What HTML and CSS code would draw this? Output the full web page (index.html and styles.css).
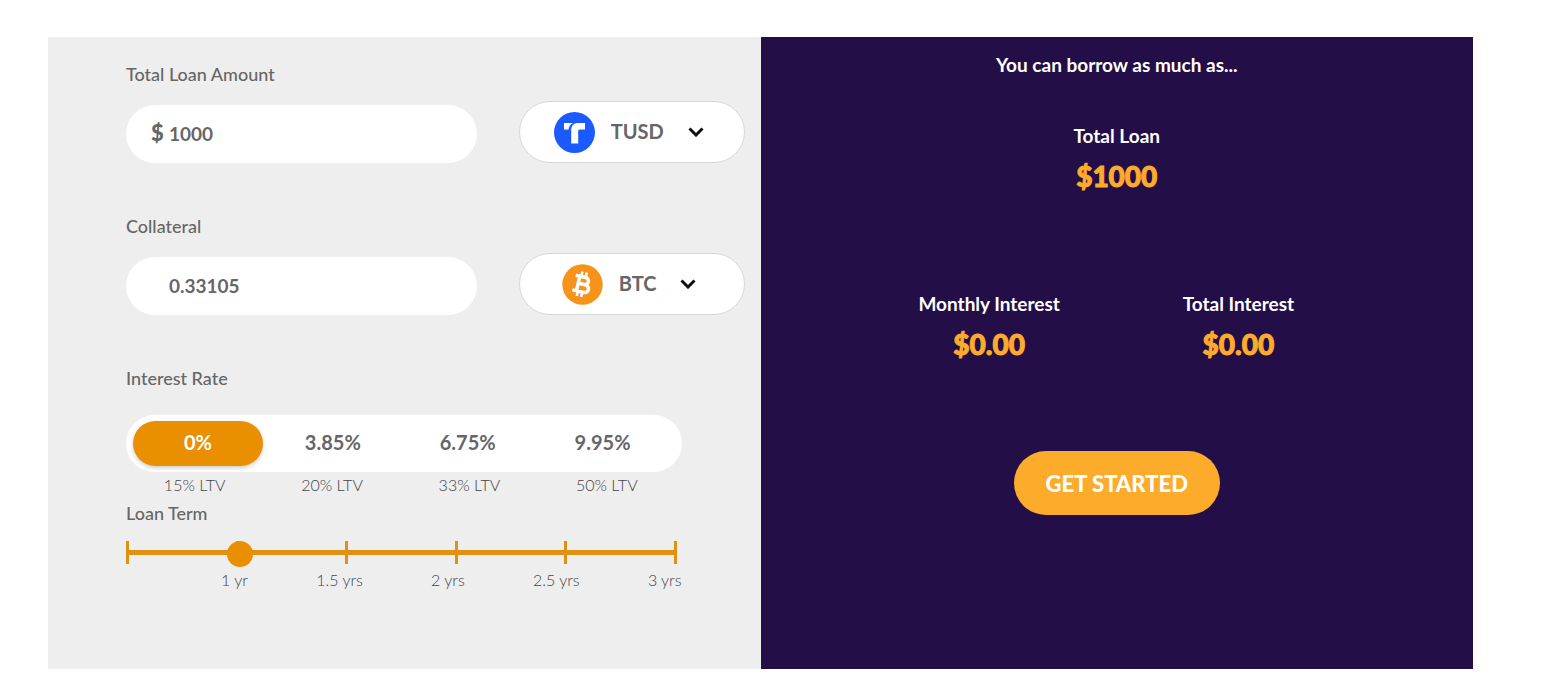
FILE: index.html
```
<!DOCTYPE html>
<html lang="en">
  <head>
    <meta charset="UTF-8" />
    <meta name="viewport" content="width=device-width, initial-scale=1.0" />
    <title>Loan Calculator</title>
    <link rel="stylesheet" href="styles.css">
  </head>
  <body>
    <main class="calculator">
      <form class="loan-form" id="loan-form">
        <div class="group">
          <label class="group-label" for="loan-amount">Total Loan Amount</label>
          <div class="field-row">
            <div class="field">
              <span class="currency">$</span>
              <input type="text" id="loan-amount" value="1000" />
            </div>
            <label class="coin">
              <svg class="coin-icon" viewBox="0 0 41 41" aria-hidden="true">
                <circle cx="20.5" cy="20.5" r="20.5" fill="#1a5aff" />
                <path d="M10 11h9c-3 1.500-4 3.500-4.500 6.500H10z" fill="#fff" />
                <path d="M17.200 31.500V18.500c0-4.500 2.300-7.500 6.300-7.500H31v6.500h-5c-1.300 0-1.800.5-1.800 1.800v12.200z" fill="#fff" />
              </svg>
              <select aria-label="Loan coin">
                <option>TUSD</option>
              </select>
              <svg class="chevron" viewBox="0 0 16 10" aria-hidden="true">
                <path d="M1.500 1.500L8 8l6.500-6.500" fill="none" stroke="#111" stroke-width="3" />
              </svg>
            </label>
          </div>
        </div>

        <div class="group">
          <label class="group-label" for="collateral">Collateral</label>
          <div class="field-row">
            <div class="field">
              <span class="currency"></span>
              <input type="text" id="collateral" value="0.33105" />
            </div>
            <label class="coin">
              <svg class="coin-icon" viewBox="0 0 41 41" aria-hidden="true">
                <circle cx="20.5" cy="20.5" r="20.2" fill="#f7931a" />
                <g transform="rotate(13 20.500 20.500)" fill="none" stroke="#fff">
                  <path d="M11.800 13H22a3.600 3.600 0 0 1 0 7.200h-6M22 20.200h1.500a3.900 3.900 0 0 1 0 7.800H11.800M16 13v15" stroke-width="3.500" />
                  <path d="M17.500 7.800v4M22 7.800v4M17.500 29v4M22 29v4" stroke-width="2.600" />
                </g>
              </svg>
              <select aria-label="Collateral coin">
                <option>BTC</option>
              </select>
              <svg class="chevron" viewBox="0 0 16 10" aria-hidden="true">
                <path d="M1.500 1.500L8 8l6.500-6.500" fill="none" stroke="#111" stroke-width="3" />
              </svg>
            </label>
          </div>
        </div>

        <div class="narrow">
          <div class="group-label" id="rate-label">Interest Rate</div>
          <div class="rates" role="radiogroup" aria-labelledby="rate-label">
            <label class="rate"><input type="radio" name="rate" checked /><span>0%</span></label>
            <label class="rate"><input type="radio" name="rate" /><span>3.85%</span></label>
            <label class="rate"><input type="radio" name="rate" /><span>6.75%</span></label>
            <label class="rate"><input type="radio" name="rate" /><span>9.95%</span></label>
          </div>
          <div class="ltv">
            <span>15% LTV</span>
            <span>20% LTV</span>
            <span>33% LTV</span>
            <span>50% LTV</span>
          </div>

          <label class="group-label" for="loan-term">Loan Term</label>
          <div class="term">
            <div class="ticks">
              <i></i><i></i><i></i><i></i><i></i><i></i>
            </div>
            <input type="range" id="loan-term" min="0.5" max="3" step="0.5" value="1" />
          </div>
          <div class="term-labels">
            <span>1 yr</span>
            <span>1.5 yrs</span>
            <span>2 yrs</span>
            <span>2.5 yrs</span>
            <span>3 yrs</span>
          </div>
        </div>
      </form>

      <section class="summary">
        <h2>You can borrow as much as...</h2>
        <div class="total">
          <h3>Total Loan</h3>
          <p class="amount">$1000</p>
        </div>
        <div class="interest">
          <div>
            <h3>Monthly Interest</h3>
            <p class="amount">$0.00</p>
          </div>
          <div>
            <h3>Total Interest</h3>
            <p class="amount">$0.00</p>
          </div>
        </div>
        <button class="get-started" type="submit" form="loan-form">GET STARTED</button>
      </section>
    </main>
  </body>
</html>
```
FILE: styles.css
```
* {
  box-sizing: border-box;
}
body {
  margin: 0;
  background-color: #ffffff;
  color: #666666;
  font-family: "Lato", sans-serif;
  font-size: 18px;
  line-height: 24px;
}
.calculator {
  display: grid;
  grid-template-columns: 1fr 1fr;
  margin: 37px 87px 28px 48px;
}

/* Left side */
.loan-form {
  padding: 25px 16px 77px 78px;
  background-color: #eeeeee;
}
.group {
  margin-bottom: 51px;
}
.group-label {
  display: block;
  font-weight: 500;
}
.field-row {
  display: grid;
  grid-template-columns: 14fr 9fr;
  gap: 42px;
  align-items: end;
  margin-top: 15px;
}
.field {
  display: flex;
  align-items: center;
  height: 58px;
  padding: 0 25px 2px;
  background-color: #ffffff;
  border-radius: 29px;
}
.currency {
  width: 18px;
  font-size: 22px;
  font-weight: 900;
}
.field input {
  flex: 1;
  min-width: 0;
  padding: 0;
  border: none;
  background: none;
  color: #666666;
  font-family: inherit;
  font-size: 19px;
  font-weight: bold;
}
.coin {
  display: flex;
  align-items: center;
  justify-content: center;
  height: 62px;
  padding-right: 6px;
  background-color: #ffffff;
  border: 1px solid #d8d8d8;
  border-radius: 31px;
  cursor: pointer;
}
.coin-icon {
  width: 41px;
  height: 41px;
  margin-right: 16px;
}
.coin select {
  padding: 0 0 2px;
  border: none;
  background: none;
  appearance: none;
  color: #666666;
  font-family: inherit;
  font-size: 20px;
  font-weight: bold;
  cursor: pointer;
}
.chevron {
  width: 16px;
  height: 10px;
  margin-left: 23px;
}
.narrow {
  margin-right: 63px;
}
.rates {
  display: grid;
  grid-template-columns: repeat(4, 1fr);
  gap: 5px;
  margin-top: 25px;
  padding: 6px 14px 6px 7px;
  background-color: #ffffff;
  border-radius: 29px;
}
.rate {
  position: relative;
  cursor: pointer;
}
.rate input {
  position: absolute;
  margin: 0;
  opacity: 0;
}
.rate span {
  display: block;
  height: 45px;
  border-radius: 23px;
  font-size: 20px;
  font-weight: bold;
  line-height: 43px;
  text-align: center;
}
.rate input:checked + span {
  background-color: #e98f00;
  color: #ffffff;
  box-shadow: 0 2px 4px rgba(0, 0, 0, 0.2);
}
.ltv,
.term-labels {
  color: #444444;
  font-size: 16px;
  font-weight: 300;
}
.ltv {
  display: grid;
  grid-template-columns: repeat(4, 1fr);
  margin: 1px 0 4px;
  padding-right: 6px;
  text-align: center;
}

/* Term slider */
.term {
  display: grid;
  align-items: center;
  margin-top: 16px;
  margin-right: 5px;
}
.ticks,
.term input {
  grid-area: 1 / 1;
}
.ticks {
  display: flex;
  align-self: start;
  justify-content: space-between;
  height: 23px;
  background: linear-gradient(#e09112, #e09112) center / 100% 5px no-repeat;
}
.ticks i {
  width: 3px;
  background-color: #e09112;
}
.term input {
  height: 26px;
  margin: 0 -6px;
  background: none;
  appearance: none;
  cursor: pointer;
}
.term input::-webkit-slider-thumb {
  width: 26px;
  height: 26px;
  border: none;
  border-radius: 50%;
  background-color: #e98f00;
  appearance: none;
}
.term-labels {
  display: flex;
  justify-content: space-between;
  margin-top: 1px;
  padding-left: 95px;
}

/* Right side */
.summary {
  padding-top: 16px;
  background-color: #240e48;
  color: #ffffff;
  text-align: center;
}
.summary h2,
.summary h3 {
  margin: 0;
  font-size: 19px;
  font-weight: bold;
}
.total {
  margin-top: 47px;
}
.amount {
  margin: 12px 0 0;
  color: #fcab2b;
  font-size: 28px;
  font-weight: 900;
  line-height: 32px;
  -webkit-text-stroke: 1px #fcab2b;
}
.interest {
  display: grid;
  grid-template-columns: 1fr 1fr;
  margin-top: 100px;
  padding: 0 110px 0 104px;
}
.get-started {
  height: 64px;
  margin-top: 91px;
  padding: 0 32px;
  border: none;
  border-radius: 32px;
  background-color: #fcab2b;
  color: #ffffff;
  font-family: inherit;
  font-size: 22px;
  font-weight: 900;
  cursor: pointer;
}
```
